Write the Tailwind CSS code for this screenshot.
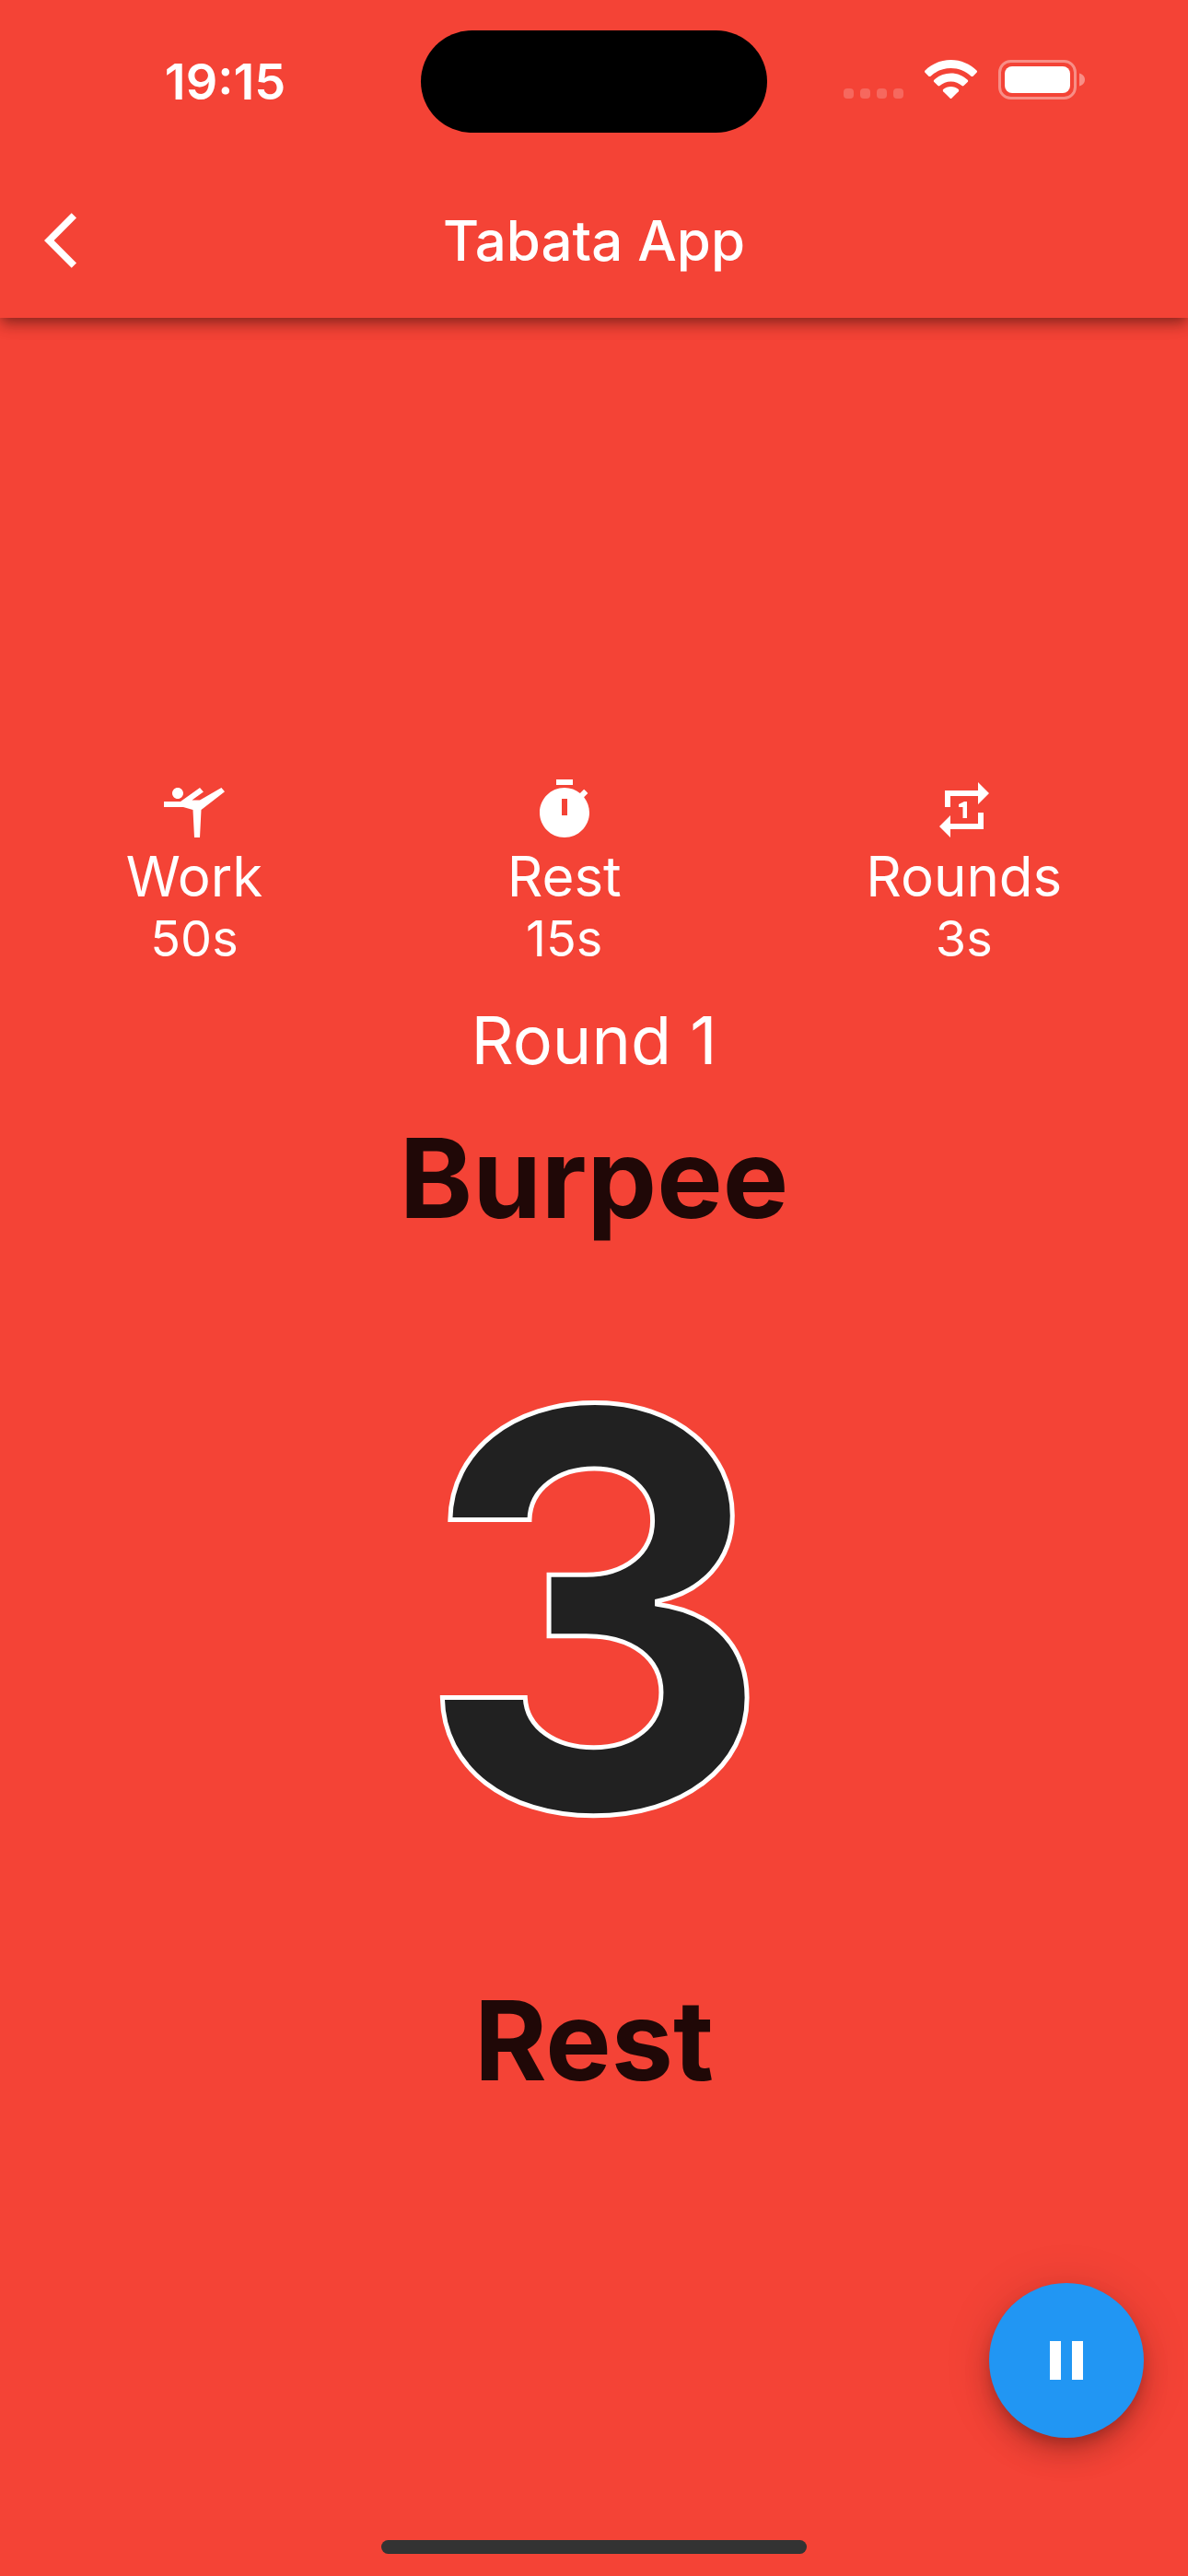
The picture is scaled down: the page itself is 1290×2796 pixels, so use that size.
<!DOCTYPE html>
<html lang="en">
<head>
<meta charset="utf-8">
<meta name="viewport" content="width=device-width, initial-scale=1">
<title>Tabata App</title>
<script src="https://cdn.jsdelivr.net/npm/@tailwindcss/browser@4"></script>
</head>
<body class="relative flex min-h-screen flex-col overflow-x-hidden bg-[#f44336] font-['Inter',sans-serif] text-white">

  <header class="bg-[#f44336] shadow-[0_6px_12px_-3px_rgba(0,0,0,0.3),0_9px_15px_rgba(0,0,0,0.16),0_3px_24px_rgba(0,0,0,0.08)]">
    <!-- Status bar -->
    <div class="grid h-[177px] grid-cols-[1fr_376px_1fr] items-center">
      <div class="pl-8 text-center text-[54px] leading-[64px] font-semibold">19:15</div>
      <div class="h-[111px] rounded-full bg-black"></div>
      <div class="flex items-center justify-end pr-28 pb-1">
        <svg class="h-[43px] w-[66px]" viewBox="0 0 66 43" fill="#fff" fill-opacity=".2" aria-hidden="true">
          <rect x="0" y="31" width="11" height="11" rx="4"/><rect x="18" y="31" width="11" height="11" rx="4"/><rect x="36" y="31" width="11" height="11" rx="4"/><rect x="54" y="31" width="11" height="11" rx="4"/>
        </svg>
        <svg class="ml-[22px] h-[43px] w-[57px]" viewBox="0 0 57 43" fill="#fff" aria-hidden="true">
          <path d="M28.500 0C39.500 0 49.500 4.500 56.500 11.500Q57.500 12.700 56.500 13.800L52.600 17.700Q51.500 18.500 50.500 17.700C44.500 12.200 36.900 9 28.500 9S12.500 12.200 6.500 17.700Q5.500 18.500 4.400 17.700L.5 13.800Q-.5 12.700.5 11.500C7.500 4.500 17.500 0 28.500 0Z"/>
          <path d="M28.500 14.500C35.500 14.500 42 17.200 46.700 21.800Q47.700 22.900 46.700 24L42.500 28.100Q41.500 29 40.500 28.100C37.300 25.300 33.200 23.400 28.500 23.400S19.700 25.300 16.500 28.100Q15.500 29 14.500 28.100L10.300 24Q9.300 22.900 10.300 21.800C15 17.200 21.500 14.500 28.500 14.500Z"/>
          <path d="M28.500 29C31.700 29 34.600 30.200 36.800 32.100Q37.800 33.100 36.800 34.200L29.500 41.500Q28.500 42.500 27.500 41.500L20.200 34.200Q19.200 33.100 20.200 32.100C22.400 30.200 25.300 29 28.500 29Z"/>
        </svg>
        <svg class="ml-[23px] h-[43px] w-[94px]" viewBox="0 0 94 43" fill="#fff" aria-hidden="true">
          <rect x="1.500" y="1.500" width="82" height="40" rx="12" fill="none" stroke="#fff" stroke-opacity=".4" stroke-width="3"/>
          <rect x="7" y="7" width="71" height="29" rx="8"/>
          <path d="M88 14.500C91.500 15.500 94 18 94 21.500S91.500 27.500 88 28.500Z" fill-opacity=".4"/>
        </svg>
      </div>
    </div>
    <!-- App bar -->
    <div class="grid h-[168px] grid-cols-[1fr_auto_1fr] items-center">
      <button type="button" aria-label="Back" class="ml-12 size-[72px]">
        <svg class="size-[72px]" viewBox="0 0 24 24" fill="currentColor" aria-hidden="true"><path d="M11.670 3.870 9.900 2.100 0 12l9.900 9.900 1.770-1.770L3.540 12z"/></svg>
      </button>
      <h1 class="text-[60px] leading-[72px] font-medium">Tabata App</h1>
    </div>
  </header>

  <main class="flex flex-1 flex-col justify-center gap-9 pb-3 text-center">
    <dl class="flex justify-around px-1">
      <div class="flex flex-col items-center">
        <svg class="size-[72px]" viewBox="0 0 24 24" fill="currentColor" aria-hidden="true"><path d="M4 6c0-1.100.9-2 2-2s2 .9 2 2-.9 2-2 2-2-.9-2-2zM1 9h6l7-5 1.310 1.520L11.140 8.500H14L21.800 4 23 5.400 14.500 12 14 22h-2l-.5-10L8 11H1V9z"/></svg>
        <dt class="text-[60px] leading-[72px]">Work</dt>
        <dd class="text-[54px] leading-[64px]">50s</dd>
      </div>
      <div class="flex flex-col items-center">
        <svg class="size-[72px]" viewBox="0 0 24 24" fill="currentColor" fill-rule="evenodd" aria-hidden="true"><path d="M15 1H9v2h6V1z"/><path d="M19.030 7.390l1.420-1.420c-.43-.51-.9-.99-1.410-1.410l-1.420 1.420C16.070 4.740 14.120 4 12 4c-4.970 0-9 4.030-9 9s4.020 9 9 9 9-4.030 9-9c0-2.120-.74-4.070-1.970-5.610zM13 14h-2V8h2v6z"/></svg>
        <dt class="text-[60px] leading-[72px]">Rest</dt>
        <dd class="text-[54px] leading-[64px]">15s</dd>
      </div>
      <div class="flex flex-col items-center">
        <svg class="size-[72px]" viewBox="0 0 24 24" fill="currentColor" aria-hidden="true"><path d="M7 7h10v3l4-4-4-4v3H5v6h2V7zm10 10H7v-3l-4 4 4 4v-3h12v-6h-2v4zm-4-2V9h-1l-2 1v1h1.500v4H13z"/></svg>
        <dt class="text-[60px] leading-[72px]">Rounds</dt>
        <dd class="text-[54px] leading-[64px]">3s</dd>
      </div>
    </dl>
    <p class="text-[72px] leading-[84px]">Round 1</p>
    <h2 class="text-[120px] leading-[144px] font-bold text-black/87">Burpee</h2>
    <p class="text-[600px] leading-[720px] font-bold text-[#212121] [-webkit-text-stroke:5px_white]">3</p>
    <p class="text-[120px] leading-[144px] font-bold text-black/87">Rest</p>
  </main>

  <!-- Floating pause button -->
  <button type="button" aria-label="Pause" class="absolute right-12 bottom-[150px] flex size-[168px] items-center justify-center rounded-full bg-[#2196f3] shadow-[0_9px_15px_-3px_rgba(0,0,0,0.2),0_18px_30px_rgba(0,0,0,0.14),0_3px_54px_rgba(0,0,0,0.12)]">
    <svg class="size-[72px]" viewBox="0 0 24 24" fill="currentColor" aria-hidden="true"><path d="M6 19h4V5H6v14zm8-14v14h4V5h-4z"/></svg>
  </button>

  <!-- Home indicator -->
  <div class="absolute inset-x-0 bottom-6 mx-auto h-[15px] w-[462px] rounded-full bg-[#333333]"></div>
</body>
</html>
